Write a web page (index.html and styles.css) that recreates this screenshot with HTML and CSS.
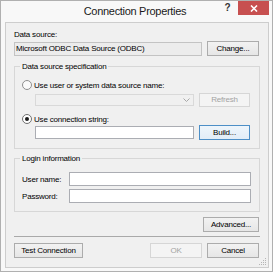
FILE: index.html
```html
<!DOCTYPE html>
<html>
<head>
<meta charset="utf-8">
<link rel="stylesheet" href="styles.css">
</head>
<body>
<div class="window">
  <div class="titlebar">
    <span class="tb-side"></span>
    <div class="title">Connection Properties</div>
    <div class="controls">
      <span class="help">?</span>
      <span class="close"><svg width="8" height="7" viewBox="0 0 8 7"><path d="M1 0.5 L7 6.5 M7 0.5 L1 6.5" stroke="#fff" stroke-width="1.6" fill="none"/></svg></span>
    </div>
  </div>
  <div class="content">
    <div class="label ds-label">Data source:</div>
    <div class="row ds-row">
      <div class="field readonly">Microsoft ODBC Data Source (ODBC)</div>
      <button class="btn btn-change">Change...</button>
    </div>
    <fieldset class="group g1">
      <legend>Data source specification</legend>
      <div class="radio r1"><span class="circle"></span><span>Use user or system data source name:</span></div>
      <div class="row sub combo-row">
        <div class="combo"><svg width="7" height="4" viewBox="0 0 7 4"><path d="M0.5 0.5 L3.5 3.5 L6.5 0.5" stroke="#a8a8a8" stroke-width="1" fill="none"/></svg></div>
        <button class="btn btn-side" disabled>Refresh</button>
      </div>
      <div class="radio r2"><span class="circle checked"></span><span>Use connection string:</span></div>
      <div class="row sub build-row">
        <div class="field input"></div>
        <button class="btn btn-side focused">Build...</button>
      </div>
    </fieldset>
    <fieldset class="group g2">
      <legend>Login information</legend>
      <div class="login">
        <span class="label">User name:</span><div class="field input"></div>
        <span class="label">Password:</span><div class="field input"></div>
      </div>
    </fieldset>
    <div class="adv-row"><button class="btn btn-adv">Advanced...</button></div>
    <div class="sep"></div>
    <div class="footer">
      <button class="btn btn-test">Test Connection</button>
      <span class="spacer"></span>
      <button class="btn btn-ok" disabled>OK</button>
      <button class="btn btn-cancel">Cancel</button>
    </div>
    <svg class="grip" width="7" height="7" viewBox="0 0 7 7">
      <rect x="6" y="0" width="1" height="1" fill="#b5b5b5"/>
      <rect x="4" y="2" width="1" height="1" fill="#b5b5b5"/>
      <rect x="6" y="2" width="1" height="1" fill="#b5b5b5"/>
      <rect x="2" y="4" width="1" height="1" fill="#b5b5b5"/>
      <rect x="4" y="4" width="1" height="1" fill="#b5b5b5"/>
      <rect x="6" y="4" width="1" height="1" fill="#b5b5b5"/>
      <rect x="0" y="6" width="1" height="1" fill="#b5b5b5"/>
      <rect x="2" y="6" width="1" height="1" fill="#b5b5b5"/>
      <rect x="4" y="6" width="1" height="1" fill="#b5b5b5"/>
      <rect x="6" y="6" width="1" height="1" fill="#b5b5b5"/>
    </svg>
  </div>
</div>
</body>
</html>
```

FILE: styles.css
```css
* { box-sizing: border-box; }
html, body { margin: 0; padding: 0; background: #f7f7f7; }
body {
  font-family: "Liberation Sans", Arial, sans-serif;
  font-size: 8px;
  letter-spacing: -0.2px;
  color: #000;
}
.window {
  width: 273px;
  height: 272px;
  border: 1px solid #b0b0b0;
  background: #f8f8f8;
  display: flex;
  flex-direction: column;
}
.titlebar {
  height: 21px;
  display: grid;
  grid-template-columns: 1fr auto 1fr;
  align-items: start;
  padding-right: 3px;
}
.title {
  font-size: 11px;
  letter-spacing: -0.3px;
  line-height: 21px;
  color: #1a1a1a;
  white-space: nowrap;
}
.controls {
  justify-self: end;
  display: flex;
}
.help {
  width: 20px;
  height: 14px;
  line-height: 14px;
  text-align: center;
  font-size: 10px;
  font-weight: bold;
  letter-spacing: 0;
  color: #333;
  padding-right: 1px;
}
.close {
  width: 31px;
  height: 14px;
  background: #c75050;
  display: flex;
  align-items: center;
  justify-content: center;
}
.content {
  position: relative;
  margin: 0 3px 3px 4px;
  height: 246px;
  border: 1px solid #cdcdcd;
  background: #f0f0f0;
  padding: 0 8px 9px 8px;
  display: flex;
  flex-direction: column;
}
.label { line-height: 11px; white-space: nowrap; }
.ds-label { margin-top: 6px; }
.row { display: flex; align-items: center; gap: 5px; }
.ds-row { margin-top: 1px; height: 15px; margin-right: 1px; }
.field {
  flex: 1;
  height: 14px;
  border: 1px solid #abadb3;
  background: #fff;
  line-height: 12px;
  padding-left: 1px;
  white-space: nowrap;
  overflow: hidden;
}
.field.readonly {
  background: #ececec;
  border-color: #c3c3c3;
}
.btn {
  font-family: inherit;
  font-size: 8px;
  letter-spacing: -0.2px;
  color: #000;
  height: 15px;
  padding: 0;
  margin: 0;
  line-height: 13px;
  border: 1px solid #acacac;
  background: linear-gradient(#f2f2f2, #e6e6e6);
  text-align: center;
  border-radius: 0;
}
.btn:disabled {
  color: #a3a3a3;
  border-color: #d6d6d6;
  background: #f4f4f4;
}
.btn.focused {
  border-color: #4d8fc7;
  background: linear-gradient(#eef5fb, #e2edf7);
}
.btn-change { width: 52px; }
.group {
  margin: 0;
  border: 1px solid #d7d7d7;
  min-inline-size: 0;
}
.group legend {
  padding: 0 2px;
  margin-left: -2px;
  line-height: 11px;
  white-space: nowrap;
}
.g1 { margin-top: 5px; padding: 0 9px 8px 7px; }
.g2 { margin-top: 4px; padding: 0 8px 8px 7px; }
.radio {
  display: flex;
  align-items: center;
  gap: 2px;
  height: 12px;
  white-space: nowrap;
}
.r1 { margin-top: 7px; }
.r2 { margin-top: 6px; }
.circle {
  width: 10px;
  height: 10px;
  border: 1px solid #8f8f8f;
  border-radius: 50%;
  background: #fafafa;
  display: flex;
  align-items: center;
  justify-content: center;
  flex: none;
}
.circle.checked { border-color: #707070; background: #fff; }
.circle.checked::after {
  content: "";
  width: 4px;
  height: 4px;
  border-radius: 50%;
  background: #1a1a1a;
}
.sub { margin-left: 13px; }
.combo-row { margin-top: 2px; height: 14px; }
.build-row { height: 15px; }
.combo {
  flex: 1;
  height: 12px;
  border: 1px solid #d9d9d9;
  background: #f0f0f0;
  display: flex;
  align-items: center;
  justify-content: flex-end;
  padding-right: 3px;
}
.btn-side { width: 51px; flex: none; }
.combo-row .btn-side { height: 14px; line-height: 12px; }
.build-row .field { height: 13px; }
.login {
  margin-top: 8px;
  display: grid;
  grid-template-columns: 47px 1fr;
  row-gap: 3px;
  align-items: center;
}
.login .field { height: 14px; }
.adv-row { display: flex; justify-content: flex-end; margin-top: 5px; margin-right: 1px; }
.btn-adv { width: 56px; }
.sep { margin-top: 4px; height: 1px; background: #a9a9a9; }
.footer { display: flex; gap: 5px; margin-top: 6px; margin-right: 1px; }
.btn-test { width: 69px; }
.spacer { flex: 1; }
.btn-ok { width: 52px; }
.btn-cancel { width: 52px; }
.grip { position: absolute; right: 2px; bottom: 2px; }
```
